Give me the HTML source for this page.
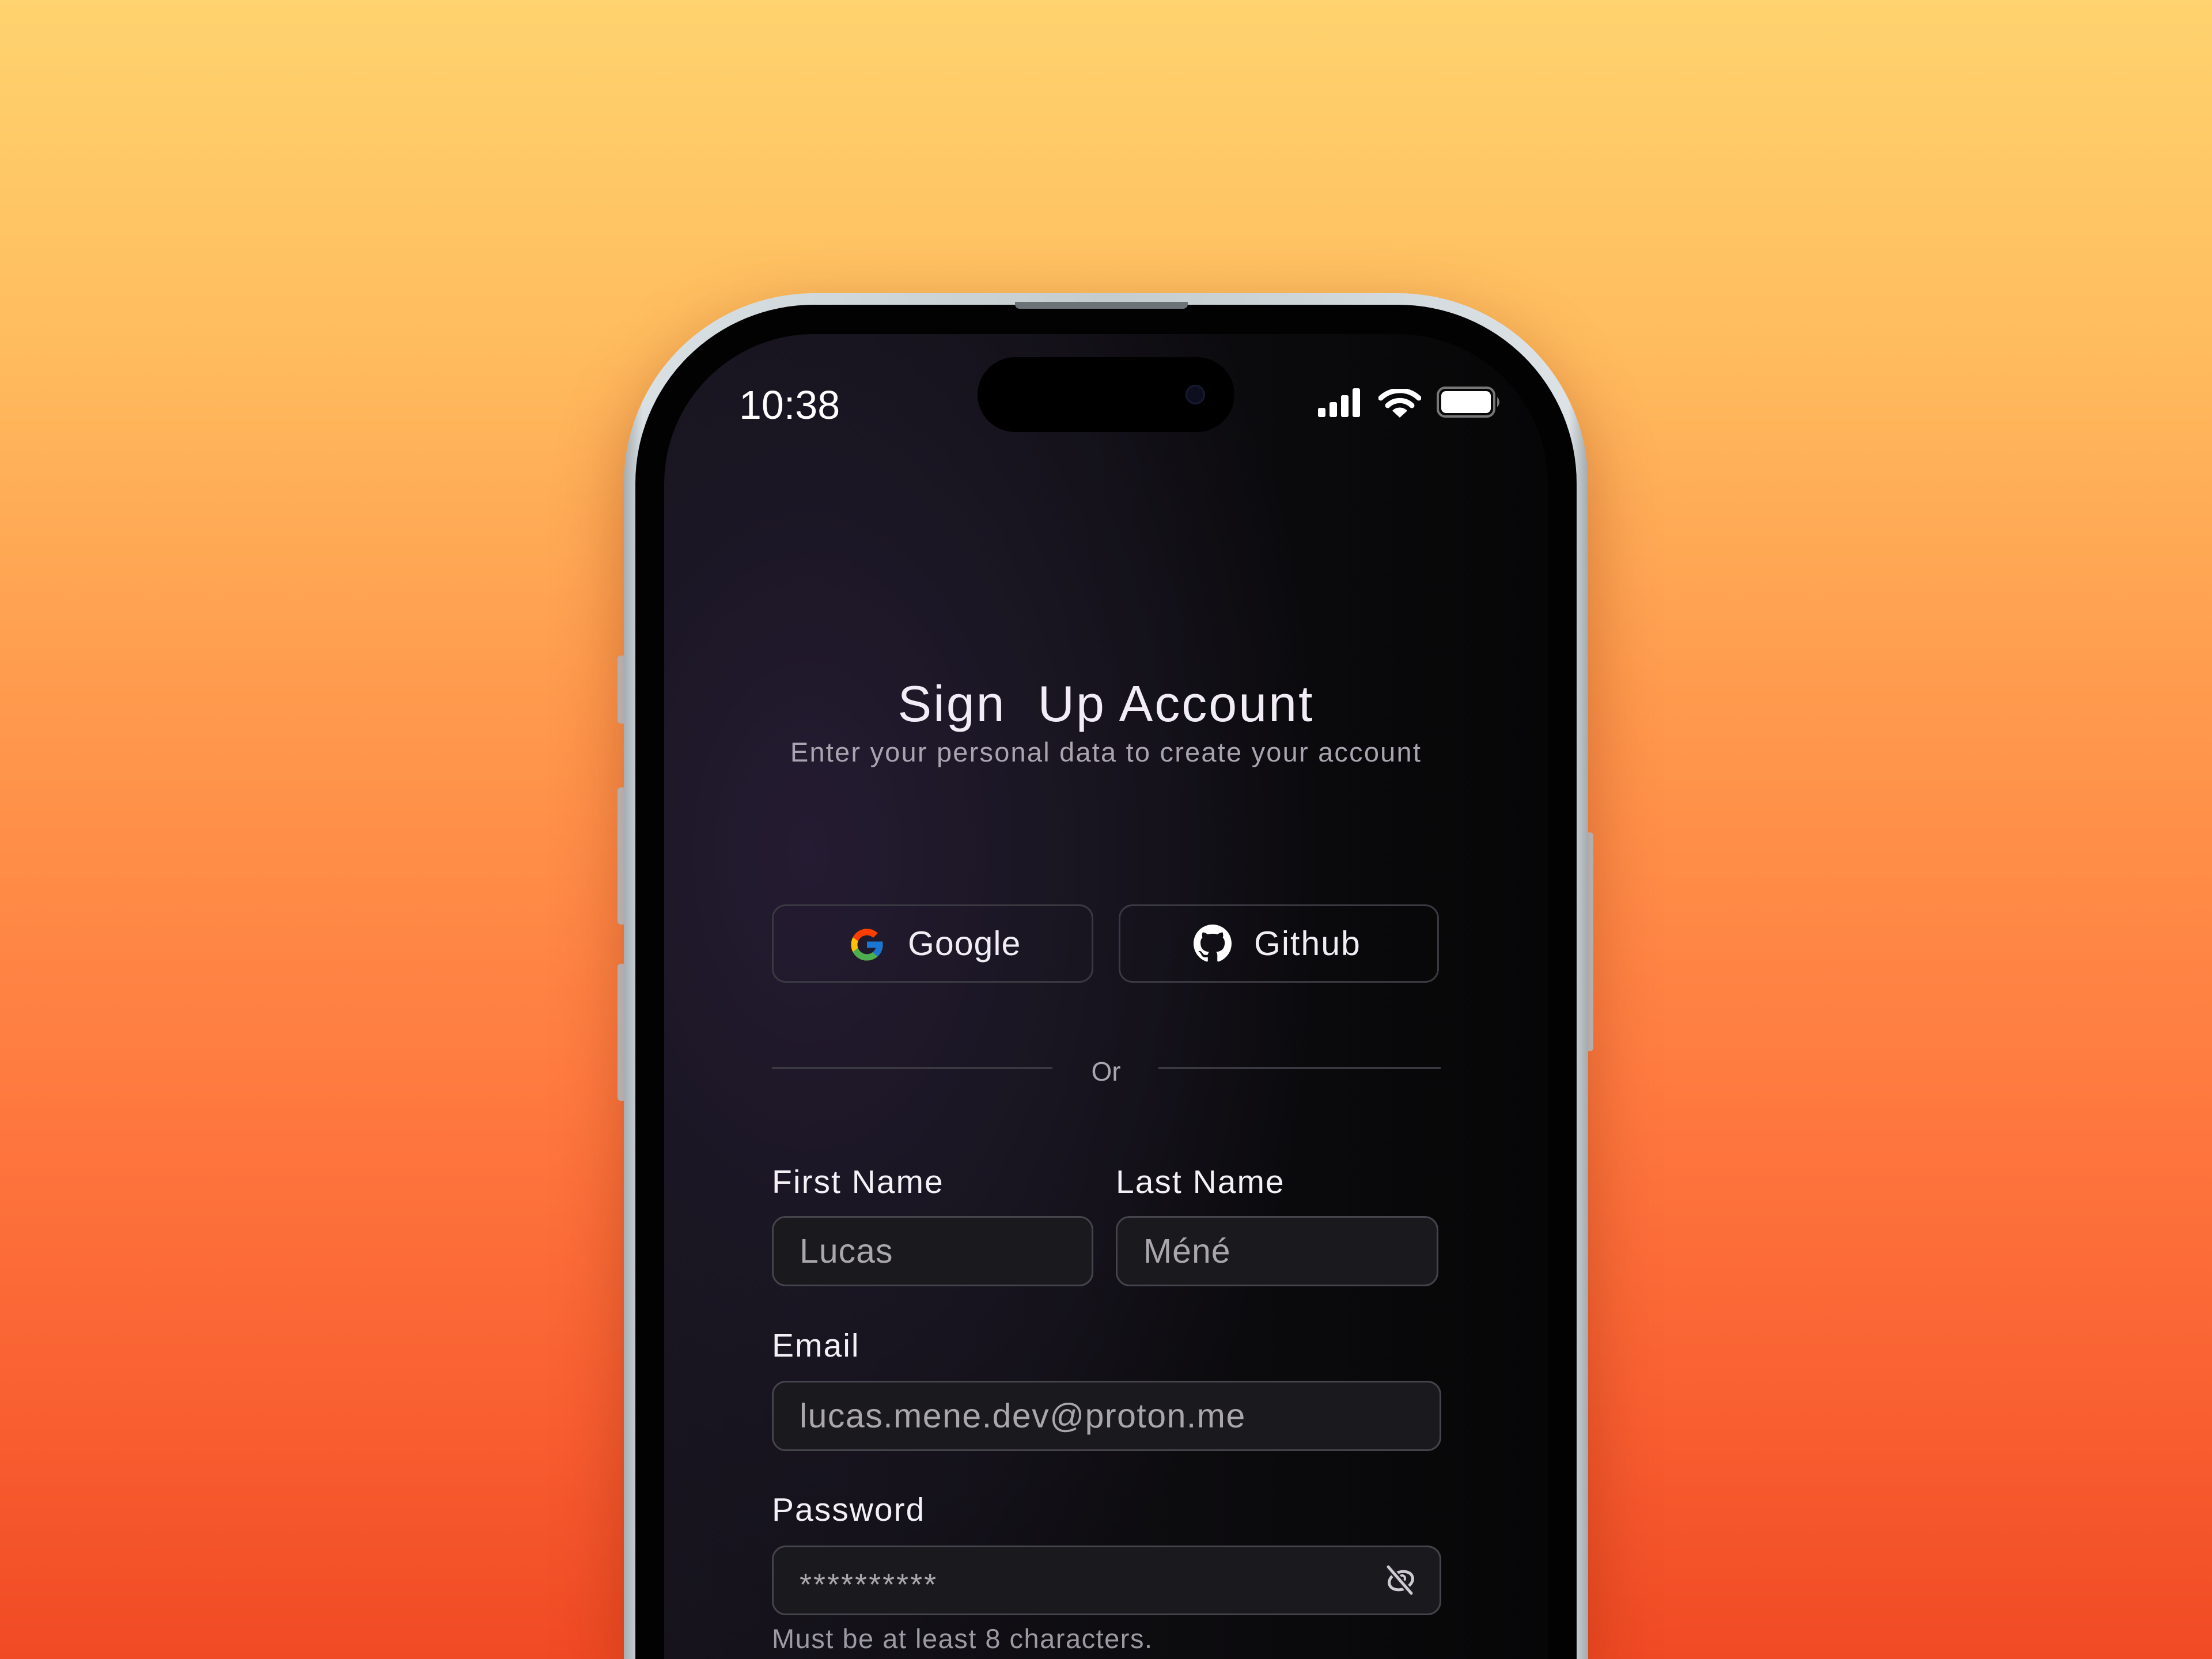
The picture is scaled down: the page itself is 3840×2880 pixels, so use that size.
<!DOCTYPE html>
<html><head><meta charset="utf-8">
<style>
html{margin:0;padding:0;width:3840px;height:2880px;overflow:hidden}
body{margin:0;padding:0;width:3840px;height:2880px;overflow:hidden;position:relative;font-family:"Liberation Sans",sans-serif;
background:linear-gradient(180deg,#ffd36f 0%,#ffbd5f 20%,#ff9a4d 42%,#ff7b40 65%,#f95f31 85%,#f04a24 100%);}
.abs{position:absolute}
.frame{left:1083px;top:509px;width:1674px;height:2371px;border-radius:330px 330px 0 0;
background:linear-gradient(90deg,#a4adb2,#d9e0e3 2%,#c4ccd0 50%,#dce2e5 98%,#a2aaae);
box-shadow:0 40px 120px rgba(120,30,0,.35);}
.bezel{left:1103px;top:529px;width:1634px;height:2351px;border-radius:310px 310px 0 0;background:#020203;}
.screen{left:1153px;top:580px;width:1534px;height:2300px;border-radius:260px 260px 0 0;overflow:hidden;
background:radial-gradient(ellipse 900px 1500px at 250px 900px,#251b32 0%,#1a1623 45%,rgba(10,10,12,0) 100%),linear-gradient(90deg,#16131c 0%,#0c0b0e 60%,#060607 100%);}
.clip{left:0;top:0;width:3840px;height:2880px;overflow:hidden}
.btn{background:#c2c9cd;border-radius:6px}
.txt{color:#f1edf5;white-space:nowrap}
.box{border:3px solid #3a3840;border-radius:24px;box-sizing:border-box}
.inp{background:#1a191e;border:3px solid #45434b;border-radius:24px;box-sizing:border-box;color:#aaa6ae;font-size:59px;letter-spacing:1px;padding-left:45px;display:flex;align-items:center}
.lbl{color:#f3f0f6;font-size:57px;letter-spacing:2px;white-space:nowrap}
</style></head><body>
<div class="abs clip">
<div class="abs btn" style="left:1072px;top:1138px;width:16px;height:118px"></div>
<div class="abs btn" style="left:1072px;top:1367px;width:16px;height:238px"></div>
<div class="abs btn" style="left:1072px;top:1673px;width:16px;height:238px"></div>
<div class="abs btn" style="left:2752px;top:1445px;width:14px;height:380px"></div>
<div class="abs frame"></div>
<div class="abs bezel"></div>
<div class="abs" style="left:1762px;top:524px;width:300px;height:12px;background:#6c7378;border-radius:0 0 8px 8px"></div>
<div class="abs screen"></div>
<div class="abs" style="left:1697px;top:620px;width:446px;height:130px;border-radius:65px;background:#000"></div>
<div class="abs" style="left:2058px;top:668px;width:34px;height:34px;border-radius:50%;background:#0d0f1e;box-shadow:inset 0 0 6px #2a2f55"></div>
<div class="abs txt" style="left:1283px;top:660px;font-size:70px;line-height:86px;color:#fff">10:38</div>
<svg class="abs" style="left:2286px;top:672px" width="80" height="54" viewBox="0 0 80 54">
<rect x="2" y="36" width="13" height="16" rx="3" fill="#fff"/><rect x="22" y="26" width="13" height="26" rx="3" fill="#fff"/><rect x="42" y="14" width="13" height="38" rx="3" fill="#fff"/><rect x="62" y="2" width="13" height="50" rx="3" fill="#fff"/></svg>
<svg class="abs" style="left:2393px;top:675px" width="74" height="52" viewBox="0 0 74 52">
<path d="M4 16 A48 48 0 0 1 70 16" stroke="#fff" stroke-width="9" fill="none" stroke-linecap="round"/>
<path d="M16 29 A30 30 0 0 1 58 29" stroke="#fff" stroke-width="9" fill="none" stroke-linecap="round"/>
<path d="M37 50 L24 38 A18 18 0 0 1 50 38 Z" fill="#fff"/></svg>
<svg class="abs" style="left:2493px;top:670px" width="116" height="56" viewBox="0 0 116 56">
<rect x="3" y="3" width="98" height="50" rx="13" fill="none" stroke="#777" stroke-width="4"/>
<rect x="9" y="9" width="86" height="38" rx="8" fill="#fff"/>
<path d="M106 19 q8 9 0 18 z" fill="#777"/></svg>
<div class="abs txt" style="left:0;width:3840px;text-align:center;top:1168px;font-size:88px;line-height:108px;letter-spacing:3px;color:#f2ecf7">Sign&nbsp; Up Account</div>
<div class="abs txt" style="left:0;width:3840px;text-align:center;top:1278px;font-size:47px;line-height:56px;letter-spacing:2.2px;color:#aaa4b0">Enter your personal data to create your account</div>
<div class="abs box" style="left:1340px;top:1570px;width:558px;height:136px"></div>
<div class="abs box" style="left:1942px;top:1570px;width:556px;height:136px"></div>
<svg class="abs" style="left:1472px;top:1607px" width="66" height="66" viewBox="0 0 48 48">
<path fill="#FFC107" d="M43.6 20.1H42V20H24v8h11.3C33.7 32.7 29.2 36 24 36c-6.6 0-12-5.4-12-12s5.4-12 12-12c3.1 0 5.8 1.2 7.9 3.1l5.7-5.7C34 6.1 29.3 4 24 4 12.9 4 4 12.9 4 24s8.9 20 20 20 20-8.9 20-20c0-1.3-.1-2.6-.4-3.9z"/>
<path fill="#FF3D00" d="M6.3 14.7l6.6 4.8C14.7 15.1 19 12 24 12c3.1 0 5.8 1.2 7.9 3.1l5.7-5.7C34 6.1 29.3 4 24 4 16.3 4 9.7 8.3 6.3 14.7z"/>
<path fill="#4CAF50" d="M24 44c5.2 0 9.9-2 13.4-5.2l-6.2-5.2C29.2 35.1 26.7 36 24 36c-5.2 0-9.6-3.3-11.3-8l-6.5 5C9.5 39.6 16.2 44 24 44z"/>
<path fill="#1976D2" d="M43.6 20.1H42V20H24v8h11.3c-.8 2.2-2.2 4.2-4.1 5.6l6.2 5.2C37 39.2 44 34 44 24c0-1.3-.1-2.6-.4-3.9z"/></svg>
<div class="abs txt" style="left:1576px;top:1606px;font-size:59px;line-height:64px;letter-spacing:1px">Google</div>
<svg class="abs" style="left:2072px;top:1605px" width="66" height="66" viewBox="0 0 16 16">
<path fill="#fff" d="M8 0C3.58 0 0 3.58 0 8c0 3.54 2.29 6.53 5.47 7.59.4.07.55-.17.55-.38 0-.19-.01-.82-.01-1.49-2.01.37-2.53-.49-2.69-.94-.09-.23-.48-.94-.82-1.13-.28-.15-.68-.52-.01-.53.63-.01 1.08.58 1.23.82.72 1.21 1.87.87 2.33.66.07-.52.28-.87.51-1.07-1.78-.2-3.64-.89-3.64-3.95 0-.87.31-1.59.82-2.15-.08-.2-.36-1.02.08-2.12 0 0 .67-.21 2.2.82.64-.18 1.32-.27 2-.27.68 0 1.36.09 2 .27 1.53-1.04 2.2-.82 2.2-.82.44 1.1.16 1.92.08 2.12.51.56.82 1.27.82 2.15 0 3.07-1.87 3.75-3.65 3.95.29.25.54.73.54 1.48 0 1.07-.01 1.93-.01 2.2 0 .21.15.46.55.38A8.013 8.013 0 0016 8c0-4.42-3.58-8-8-8z"/></svg>
<div class="abs txt" style="left:2177px;top:1606px;font-size:59px;line-height:64px;letter-spacing:2px">Github</div>
<div class="abs" style="left:1340px;top:1852px;width:487px;height:4px;background:#3a3840"></div>
<div class="abs" style="left:2011px;top:1852px;width:490px;height:4px;background:#3a3840"></div>
<div class="abs txt" style="left:1870px;width:100px;text-align:center;top:1832px;font-size:46px;line-height:56px;color:#a9a5ad">Or</div>
<div class="abs lbl" style="left:1340px;top:2020px;line-height:64px">First Name</div>
<div class="abs lbl" style="left:1937px;top:2020px;line-height:64px">Last Name</div>
<div class="abs inp" style="left:1340px;top:2111px;width:558px;height:122px">Lucas</div>
<div class="abs inp" style="left:1937px;top:2111px;width:560px;height:122px">Méné</div>
<div class="abs lbl" style="left:1340px;top:2304px;line-height:64px">Email</div>
<div class="abs inp" style="left:1340px;top:2397px;width:1162px;height:122px;letter-spacing:1.5px">lucas.mene.dev@proton.me</div>
<div class="abs lbl" style="left:1340px;top:2589px;line-height:64px">Password</div>
<div class="abs inp" style="left:1340px;top:2683px;width:1162px;height:121px;font-size:54px;letter-spacing:3px;padding-top:14px">**********</div>
<svg class="abs" style="left:2404px;top:2716px" width="56" height="54" viewBox="0 0 56 54">
<ellipse cx="28" cy="28" rx="21" ry="15" transform="rotate(-20 28 28)" fill="none" stroke="#cfcbd3" stroke-width="5"/>
<circle cx="30" cy="24" r="5" fill="none" stroke="#cfcbd3" stroke-width="4"/>
<line x1="6" y1="4" x2="46" y2="50" stroke="#1e1c24" stroke-width="11"/>
<line x1="6" y1="4" x2="46" y2="50" stroke="#cfcbd3" stroke-width="5" stroke-linecap="round"/></svg>
<div class="abs txt" style="left:1340px;top:2818px;font-size:47px;line-height:54px;letter-spacing:1.5px;color:#9e9aa3">Must be at least 8 characters.</div>
</div>
</body></html>
